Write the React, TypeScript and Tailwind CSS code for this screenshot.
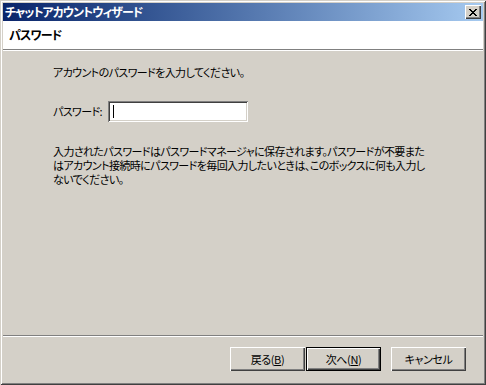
import React from 'react';

const jp = "font-['MS_UI_Gothic','Noto_Sans_CJK_JP',sans-serif] [font-feature-settings:'palt']";

function Btn({
  children,
  primary,
}: {
  children: React.ReactNode;
  primary?: boolean;
}) {
  return (
    <div
      className={`flex h-[24px] w-[75px] items-center justify-center bg-[#D4D0C8] text-[11px] leading-none tracking-[-0.4px] text-black ${
        primary
          ? 'shadow-[inset_1px_1px_#000,inset_-1px_-1px_#000,inset_2px_2px_#fff,inset_-2px_-2px_#404040,inset_-3px_-3px_#808080]'
          : 'shadow-[inset_1px_1px_#fff,inset_-1px_-1px_#404040,inset_-2px_-2px_#808080]'
      }`}
    >
      {children}
    </div>
  );
}

export default function App() {
  return (
    <div
      className={`flex h-[385px] w-[486px] flex-col bg-[#D4D0C8] p-[3px] text-black shadow-[inset_1px_1px_#D4D0C8,inset_-1px_-1px_#404040,inset_2px_2px_#fff,inset_-2px_-2px_#808080] ${jp}`}
    >
      {/* Title bar */}
      <div className="flex h-[18px] items-center justify-between bg-gradient-to-r from-[#0A246A] to-[#A6CAF0] pl-[2px] pr-[2px]">
        <span className="whitespace-nowrap text-[12px] font-bold leading-none tracking-[-1px] text-white">
          チャットアカウントウィザード
        </span>
        <div className="flex h-[14px] w-[16px] items-center justify-center bg-[#D4D0C8] shadow-[inset_1px_1px_#fff,inset_-1px_-1px_#404040,inset_-2px_-2px_#808080]">
          <svg width="8" height="7" viewBox="0 0 8 7" shapeRendering="crispEdges">
            <path
              d="M0 0h2v1h-2zM6 0h2v1h-2zM1 1h2v1h-2zM5 1h2v1h-2zM2 2h4v1h-4zM3 3h2v1h-2zM2 4h4v1h-4zM1 5h2v1h-2zM5 5h2v1h-2zM0 6h2v1h-2zM6 6h2v1h-2z"
              fill="#000"
            />
          </svg>
        </div>
      </div>

      {/* Header */}
      <div className="flex h-[29px] items-center border-b border-[#808080] bg-white pl-[6px]">
        <span className="text-[12px] font-bold leading-none tracking-[-0.8px]">パスワード</span>
      </div>
      <div className="h-px bg-white" />

      {/* Body */}
      <div className="flex flex-1 flex-col whitespace-nowrap pl-[50px] text-[11px] tracking-[-0.6px]">
        <p className="mt-[14px] leading-[14px]">
          アカウントのパスワードを入力してください。
        </p>
        <div className="mt-[22px] flex items-center gap-[6px]">
          <span className="leading-none">パスワード:</span>
          <div className="flex h-[21px] w-[140px] items-center bg-white pl-[5px] shadow-[inset_1px_1px_#808080,inset_-1px_-1px_#fff,inset_2px_2px_#404040,inset_-2px_-2px_#D4D0C8]">
            <div className="h-[13px] w-px bg-black" />
          </div>
        </div>
        <div className="mt-[23px] flex flex-col gap-[1px]">
          <p className="leading-[13px]">
            入力されたパスワードはパスワードマネージャに保存されます。パスワードが不要また
          </p>
          <p className="leading-[13px]">
            はアカウント接続時にパスワードを毎回入力したいときは、このボックスに何も入力し
          </p>
          <p className="leading-[13px]">ないでください。</p>
        </div>
      </div>

      {/* Footer */}
      <div className="border-t border-[#808080]" />
      <div className="h-px bg-white" />
      <div className="flex h-[45px] items-start justify-end pr-[17px] pt-[10px]">
        <Btn>
          戻る(<span className="underline">B</span>)
        </Btn>
        <div className="ml-[1px]">
          <Btn primary>
            次へ(<span className="underline">N</span>)
          </Btn>
        </div>
        <div className="ml-[10px]">
          <Btn>キャンセル</Btn>
        </div>
      </div>
    </div>
  );
}
